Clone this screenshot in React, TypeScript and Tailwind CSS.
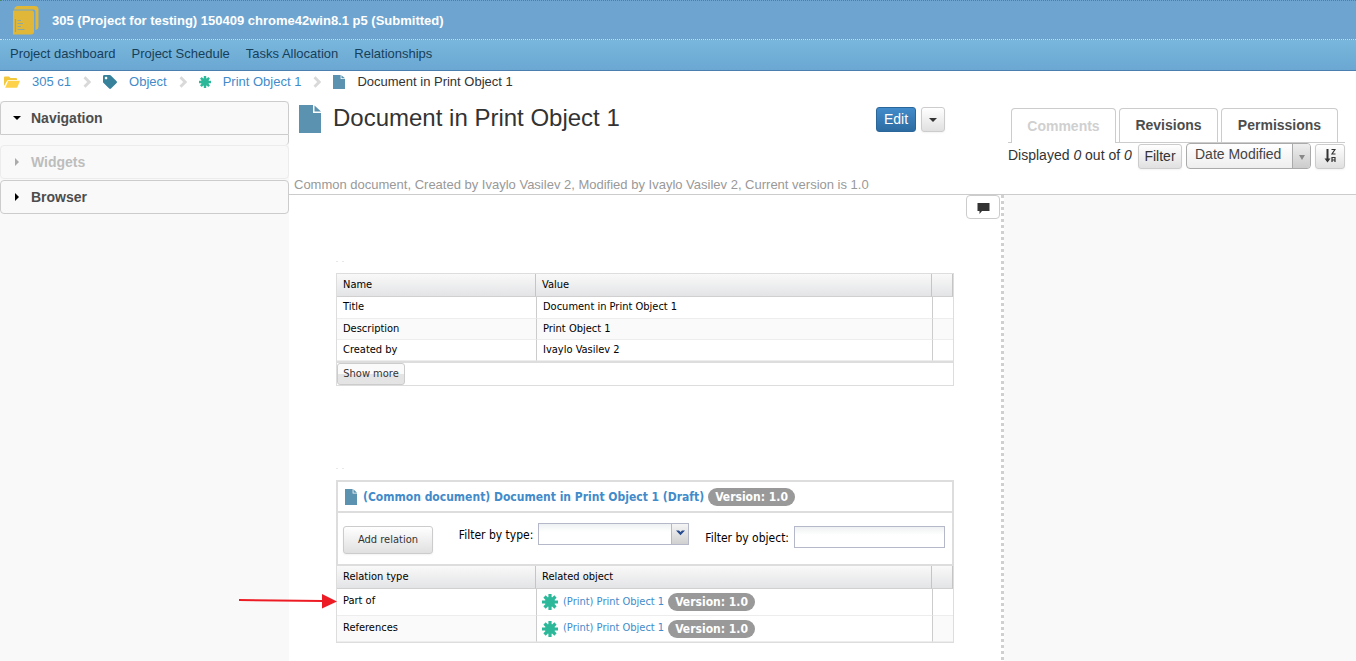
import React from "react";
import { FaTag } from "react-icons/fa";

const TAHOMA = "font-['DejaVu_Sans_Condensed','DejaVu_Sans',sans-serif]";

function DocIcon({ className }: { className: string }) {
  return (
    <svg viewBox="0 0 22 28" preserveAspectRatio="none" className={className} aria-hidden="true">
      <path d="M0 0H14V8H22V28H0Z" fill="#5a92af" />
      <path d="M15.5 0.5L22 6.5H15.5Z" fill="#5a92af" />
    </svg>
  );
}

function StarIcon({ className }: { className: string }) {
  return (
    <svg viewBox="0 0 16 16" className={className} aria-hidden="true">
      <path d="M8 0V16M0 8H16M2.5 2.5L13.5 13.5M13.5 2.5L2.5 13.5" stroke="#2db89a" strokeWidth="3.2" />
      <circle cx="8" cy="8" r="5" fill="#2db89a" />
    </svg>
  );
}

function FolderIcon() {
  return (
    <svg viewBox="0 0 16 12" className="h-3 w-4 shrink-0" aria-hidden="true">
      <path d="M0 10V1.500Q0 0.500 1 0.500H5L6.500 2H12Q13 2 13 3V4H4.500Q3.500 4 3 5Z" fill="#f3c73c" />
      <path d="M4.200 4.800H16L13.500 11Q13.200 11.700 12.500 11.700H1.200Z" fill="#fdd24a" />
    </svg>
  );
}

function ProjectIcon() {
  return (
    <svg viewBox="0 0 26 29" className="h-[29px] w-[26px]" aria-hidden="true">
      <path d="M4 0H22Q25.500 0 25.500 3.500V20.500Q25.500 23.500 22.500 24V5.500Q22.500 3.500 20.500 3.500H1Q1.500 0.500 4 0Z" fill="#e0b738" />
      <path d="M0 5Q0 4.500 1 4.500H19Q21 4.500 21 6.500V25.500Q21 28.500 18 28.500H0Z" fill="#e0b738" />
      <path d="M2.500 13V26M4.500 14.500H8M4.500 17.500H10M4.500 20.500H8M4.500 23.500H11.500" stroke="#8fa99a" strokeWidth="1.200" fill="none" />
    </svg>
  );
}

function Caret({ className }: { className: string }) {
  return (
    <svg viewBox="0 0 8 4" className={className} aria-hidden="true">
      <path d="M0 0H8L4 4Z" fill="currentColor" />
    </svg>
  );
}

function Version() {
  return (
    <span className="inline-flex h-[18px] items-center rounded-full bg-[#999] px-[7px] text-[12px] font-bold text-white">
      Version: 1.0
    </span>
  );
}

function Separator() {
  return (
    <svg viewBox="0 0 8 12" className="h-3 w-2 shrink-0" aria-hidden="true">
      <path d="M1.500 1.200L6.200 6L1.500 10.800" stroke="#d9d9d9" strokeWidth="2.800" fill="none" />
    </svg>
  );
}

function SidePanel({ title, open, faded }: { title: string; open?: boolean; faded?: boolean }) {
  return (
    <h3
      className={
        "rounded-[4px] border bg-[#f9f9f9] " +
        (faded ? "border-[#ececec] text-[#bdbdbd]" : "border-[#ccc] text-[#4d4d4d]") +
        (open ? " rounded-b-none" : "")
      }
    >
      <button className="flex h-8 w-full items-center pl-3 text-left text-[14px] font-bold">
        <Caret className={open ? "mr-[10px] h-1 w-2 text-black" : faded ? "mr-[10px] h-1 w-2 -rotate-90 text-[#aaa]" : "mr-[10px] h-1 w-2 -rotate-90 text-black"} />
        {title}
      </button>
    </h3>
  );
}

const headCell = "border-r border-b border-r-[#c5c5c5] border-b-[#d0d0d0] bg-linear-to-b from-[#f9f9f9] to-[#e3e4e6] px-[6px] text-left font-normal";

function HeadRow({ first, second }: { first: string; second: string }) {
  return (
    <thead>
      <tr className="h-[23px]">
        <th className={headCell + " w-[199px]"}>{first}</th>
        <th className={headCell}>{second}</th>
        <th className={headCell + " w-[21px]"} />
      </tr>
    </thead>
  );
}

function Marks() {
  return (
    <div className="flex h-px gap-1" aria-hidden="true">
      <span className="w-[2px] bg-[#e8e8e8]" />
      <span className="w-[2px] bg-[#e8e8e8]" />
    </div>
  );
}

const properties = [
  ["Title", "Document in Print Object 1"],
  ["Description", "Print Object 1"],
  ["Created by", "Ivaylo Vasilev 2"],
];

const relations = [
  { type: "Part of", marked: true },
  { type: "References", marked: false },
];

const greyButton = "rounded-[3px] border border-[#ccc] bg-linear-to-b from-white to-[#e0e0e0] text-[#333] shadow-xs";

export default function App() {
  return (
    <div className="flex min-h-screen flex-col bg-white font-['Liberation_Sans',Arial,sans-serif] text-[13px] text-[#333]">
      <header>
        <div className="flex h-10 items-center border-t border-b border-dotted border-t-[#4d8a5e] border-b-[#c5def0] bg-[#6ea5d0] pl-[13px]">
          <ProjectIcon />
          <h2 className="ml-[13px] pt-[2px] font-bold text-white">
            305 (Project for testing) 150409 chrome42win8.1 p5 (Submitted)
          </h2>
        </div>
        <nav className="flex h-[31px] items-center gap-4 border-b border-[#4a7fb0] bg-linear-to-b from-[#79b7dd] to-[#6ba7d2] pb-[2px] pl-[10px] text-[#163f5a]">
          <a href="#dashboard">Project dashboard</a>
          <a href="#schedule">Project Schedule</a>
          <a href="#tasks">Tasks Allocation</a>
          <a href="#relationships">Relationships</a>
        </nav>
      </header>

      <nav aria-label="Breadcrumb" className="flex h-[30px] items-start pl-1">
        <div className="flex h-[22px] items-center gap-3 text-[#428bca]">
          <FolderIcon />
          <a href="#305">305 c1</a>
          <Separator />
          <FaTag className="h-[14px] w-[14px] text-[#37819b]" aria-hidden="true" />
          <a href="#object">Object</a>
          <Separator />
          <StarIcon className="h-3 w-3" />
          <a href="#print">Print Object 1</a>
          <Separator />
          <DocIcon className="h-[14px] w-3" />
          <span className="text-[#333]">Document in Print Object 1</span>
        </div>
      </nav>

      <div className="flex grow">
        <aside className="w-[289px] shrink-0 bg-[#f9f9f9]">
          <SidePanel title="Navigation" open />
          <div className="h-[10px] rounded-br-[4px] border-r border-[#ccc]" />
          <SidePanel title="Widgets" faded />
          <div className="h-px" />
          <SidePanel title="Browser" />
        </aside>

        <div className="flex min-w-0 grow flex-col">
          <div className="flex h-[94px] border-b border-[#ccc]">
            <div className="flex min-w-0 grow flex-col justify-between">
              <div className="flex items-start pr-[63px]">
                <DocIcon className="mt-1 ml-[10px] h-7 w-[22px]" />
                <h1 className="mt-[2px] ml-3 grow text-[24px] leading-[30px]">Document in Print Object 1</h1>
                <button className="mt-[6px] h-[25px] w-10 rounded-[3px] border border-[#2b669a] bg-linear-to-b from-[#428bca] to-[#2d6ca2] text-[14px] text-white">
                  Edit
                </button>
                <button aria-label="More actions" className={"mt-[6px] ml-[5px] flex h-[25px] w-6 items-center justify-center " + greyButton}>
                  <Caret className="h-1 w-2" />
                </button>
              </div>
              <p className="pl-[5px] text-[#999]">
                Common document, Created by Ivaylo Vasilev 2, Modified by Ivaylo Vasilev 2, Current version is 1.0
              </p>
            </div>
            <div className="w-[348px] shrink-0 pt-[7px] pr-[11px] text-[14px]">
              <div className="flex h-[35px] gap-[3px] border-b border-[#ccc] pl-[3px] font-bold text-[#4d4d4d]">
                <button className="-mb-px h-[35px] w-[105px] rounded-t-[4px] border border-b-0 border-[#ccc] bg-white text-[#d0d0d0]">Comments</button>
                <button className="w-[99px] rounded-t-[4px] border border-b-0 border-[#ccc] bg-white">Revisions</button>
                <button className="w-[117px] rounded-t-[4px] border border-b-0 border-[#ccc] bg-white">Permissions</button>
              </div>
              <div className="flex items-center">
                <span className="grow whitespace-nowrap pb-[2px]">
                  Displayed <i>0</i> out of <i>0</i>
                </span>
                <button className={"h-[25px] w-11 " + greyButton}>Filter</button>
                <span className="relative ml-1 h-[26px] w-[125px]">
                  <select aria-label="Sort by" className="h-full w-full appearance-none rounded-[4px] border border-[#aaa] bg-linear-to-b from-white to-[#eee] pb-[3px] pl-2 text-[#444]">
                    <option>Date Modified</option>
                  </select>
                  <span className="pointer-events-none absolute inset-y-px right-px flex w-[18px] items-center justify-center rounded-r-[3px] border-l border-[#aaa] bg-linear-to-b from-[#eee] to-[#ccc] pt-[2px] text-[#888]">
                    <svg viewBox="0 0 6 5" className="h-[5px] w-[6px]" aria-hidden="true">
                      <path d="M0 0H6L3 5Z" fill="currentColor" />
                    </svg>
                  </span>
                </span>
                <button aria-label="Sort direction" className={"ml-1 flex h-[25px] w-[30px] items-center justify-center " + greyButton}>
                  <svg viewBox="0 0 12 14" className="h-[14px] w-3" fill="none" stroke="#333" aria-hidden="true">
                    <path d="M3.500 0V11" strokeWidth="2" />
                    <path d="M0.500 9.500H6.500L3.500 13.500Z" fill="#333" stroke="none" />
                    <path d="M7.500 0.500H11L8 5H11.500M8 13V8.500H11V13M8 11H11" strokeWidth="1.200" />
                  </svg>
                </button>
              </div>
            </div>
          </div>

          <div className="flex grow">
            <main className="min-w-0 grow">
              <div className="flex h-[66px] justify-end pr-px">
                <button aria-label="Comments" className="flex h-6 w-[34px] items-center justify-center rounded-[4px] border border-[#ccc] bg-white pt-[2px]">
                  <svg viewBox="0 0 13 11" className="h-[11px] w-[13px]" aria-hidden="true">
                    <path d="M0.500 0H12.500V8H5L2.500 11V8H0.500Z" fill="#333" />
                  </svg>
                </button>
              </div>

              <div className={"px-[47px] text-[11px] text-black " + TAHOMA}>
                <Marks />
                <section className="mt-[11px] border border-[#ddd]">
                  <table className="w-full table-fixed border-separate border-spacing-0">
                    <HeadRow first="Name" second="Value" />
                    <tbody>
                      {properties.map(([name, value]) => (
                        <tr key={name} className="h-[21px] *:border-b *:border-b-[#ededed] first:h-[22px] even:bg-[#fafafa]">
                          <td className="px-[6px]">{name}</td>
                          <td className="border-l border-l-[#ccc] px-[6px]">{value}</td>
                          <td className="border-l border-l-[#ccc]" />
                        </tr>
                      ))}
                    </tbody>
                  </table>
                  <div className="flex h-6 border-t-2 border-[#ddd]">
                    <button className="h-[22px] w-[68px] rounded-[3px] border border-[#ccc] bg-linear-to-b from-[#fafafa] from-50% to-[#e4e4e4] to-50% text-[#333]">
                      Show more
                    </button>
                  </div>
                </section>

                <div className="h-[82px]" />
                <Marks />
                <section className="mt-[11px]">
                  <h4 className="flex h-[33px] items-center border-2 border-[#ddd] pl-[7px] text-[12px] font-bold">
                    <DocIcon className="h-4 w-3" />
                    <a href="#document" className="mr-1 ml-[6px] text-[#428bca]">
                      (Common document) Document in Print Object 1 (Draft)
                    </a>
                    <Version />
                  </h4>
                  <div className="flex h-[53px] items-start border-x-2 border-b-2 border-[#ddd] pr-[7px] pl-[5px] text-[12px]">
                    <button className={"mt-[13px] h-7 w-[90px] text-[11px] " + greyButton}>Add relation</button>
                    <label htmlFor="filter-type" className="mt-[13px] ml-auto leading-[18px]">Filter by type:</label>
                    <span className="relative mt-[10px] ml-[5px] h-[22px] w-[151px]">
                      <select id="filter-type" className="h-full w-full appearance-none border border-[#b5b8c8] bg-linear-to-b from-[#eef1f2] to-white to-40%">
                        <option></option>
                      </select>
                      <span className="pointer-events-none absolute inset-y-px right-px flex w-[17px] justify-center border-l border-[#b5b8c8] bg-linear-to-b from-[#f5f5f5] to-[#d0d0d0] pt-[6px]">
                        <svg viewBox="0 0 9 6" className="h-[6px] w-[9px]" aria-hidden="true">
                          <path d="M0 0.500H3L4.500 2L6 0.500H9L4.500 5.200Z" fill="#274b8f" />
                        </svg>
                      </span>
                    </span>
                    <label htmlFor="filter-object" className="mt-4 ml-4 leading-[18px]">Filter by object:</label>
                    <input id="filter-object" type="text" className="mt-[13px] ml-[5px] h-[22px] w-[151px] border border-[#b5b8c8] bg-linear-to-b from-[#eef1f2] to-white to-40% px-1" />
                  </div>
                  <div className="border border-t-0 border-[#ddd]">
                    <table className="w-full table-fixed border-separate border-spacing-0">
                      <HeadRow first="Relation type" second="Related object" />
                      <tbody>
                        {relations.map(({ type, marked }) => (
                          <tr key={type} className="h-[26px] *:border-b *:border-b-[#ededed] first:h-[27px] even:bg-[#fafafa]">
                            <td className="relative px-[6px] pt-1 align-top">
                              {type}
                              {marked && (
                                <svg viewBox="0 0 98 16" className="absolute top-1 right-full h-4 w-[98px]" aria-hidden="true">
                                  <path d="M0 7L84 8" stroke="#ed1c24" strokeWidth="2" />
                                  <path d="M83 1L98 8.500L83 15.500Z" fill="#ed1c24" />
                                </svg>
                              )}
                            </td>
                            <td className="border-l border-l-[#ccc] bg-white px-[5px]">
                              <span className="flex items-center">
                                <StarIcon className="h-4 w-4" />
                                <a href="#print" className="mr-1 ml-[5px] text-[#428bca]">(Print) Print Object 1</a>
                                <Version />
                              </span>
                            </td>
                            <td className="border-l border-l-[#ccc]" />
                          </tr>
                        ))}
                      </tbody>
                    </table>
                  </div>
                </section>
              </div>
            </main>
            <div className="w-[3px] shrink-0 bg-[repeating-linear-gradient(to_bottom,#d0d0d0_0_3px,transparent_3px_6px)]" />
            <div className="w-[352px] shrink-0 bg-[#f9f9f9]" />
          </div>
        </div>
      </div>
    </div>
  );
}
